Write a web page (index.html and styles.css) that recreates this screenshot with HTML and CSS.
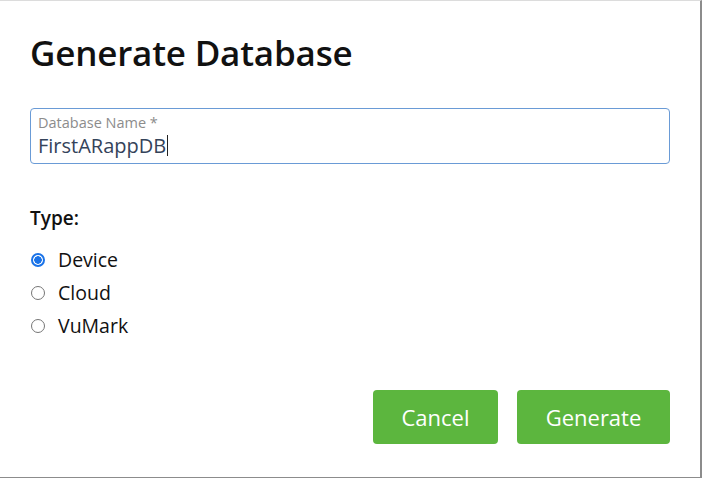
FILE: index.html
```html
<!DOCTYPE html>
<html>
<head>
<meta charset="utf-8">
<link rel="stylesheet" href="styles.css">
</head>
<body>
<div class="dialog">
  <h1 class="title">Generate Database</h1>
  <div class="field">
    <label class="field-label">Database Name *</label>
    <div class="field-value">FirstARappDB<span class="caret"></span></div>
  </div>
  <div class="type-label">Type:</div>
  <div class="radios">
    <label class="radio-row"><span class="radio checked"></span><span class="radio-text">Device</span></label>
    <label class="radio-row"><span class="radio"></span><span class="radio-text">Cloud</span></label>
    <label class="radio-row"><span class="radio"></span><span class="radio-text">VuMark</span></label>
  </div>
  <div class="actions">
    <button class="btn btn-cancel">Cancel</button>
    <button class="btn btn-generate">Generate</button>
  </div>
</div>
</body>
</html>
```

FILE: styles.css
```css
html, body {
  margin: 0;
  padding: 0;
  background: #ffffff;
}
body {
  font-family: "Open Sans", "Noto Sans", sans-serif;
  width: 702px;
  height: 479px;
  overflow: hidden;
}
.dialog {
  box-sizing: border-box;
  width: 702px;
  height: 478px;
  border-top: 1px solid #dcdcdc;
  border-right: 2px solid #8c8c8c;
  border-bottom: 1px solid #8c8c8c;
  padding: 0 30px 0 30px;
  display: flex;
  flex-direction: column;
}
.title {
  margin: 28px 0 0 0;
  font-size: 35px;
  font-weight: 600;
  line-height: 48px;
  color: #111;
  letter-spacing: -0.2px;
}
.field {
  margin-top: 31px;
  box-sizing: border-box;
  width: 640px;
  height: 56px;
  border: 1px solid #6a9bd6;
  border-radius: 4px;
  padding: 4px 7px 0 7px;
  display: flex;
  flex-direction: column;
}
.field-label {
  font-size: 14.5px;
  line-height: 19px;
  color: #8c8c8c;
  font-weight: 400;
}
.field-value {
  font-size: 20px;
  line-height: 27px;
  color: #34435a;
  display: flex;
  align-items: center;
}
.caret {
  display: inline-block;
  width: 1px;
  height: 21px;
  background: #222;
  margin-left: 1px;
}
.type-label {
  margin-top: 42px;
  font-size: 19px;
  font-weight: 600;
  line-height: 24px;
  color: #111;
}
.radios {
  margin-top: 13px;
  display: flex;
  flex-direction: column;
}
.radio-row {
  display: flex;
  align-items: center;
  height: 33px;
}
.radio {
  box-sizing: border-box;
  width: 14px;
  height: 14px;
  border-radius: 50%;
  border: 1px solid #767676;
  margin-left: 1px;
  margin-right: 13px;
  background: #fff;
}
.radio.checked {
  border: 2px solid #1a73e8;
  background: radial-gradient(circle, #1a73e8 0, #1a73e8 3.5px, #fff 4px);
}
.radio-text {
  font-size: 19.5px;
  color: #111;
}
.actions {
  margin-top: 48px;
  display: flex;
  justify-content: flex-end;
  gap: 19px;
}
.btn {
  font-family: "Open Sans", "Noto Sans", sans-serif;
  height: 54px;
  border: none;
  border-radius: 4px;
  background: #5cb63e;
  color: #ffffff;
  font-size: 22px;
  padding: 0;
}
.btn-cancel {
  width: 125px;
}
.btn-generate {
  width: 153px;
}
```
